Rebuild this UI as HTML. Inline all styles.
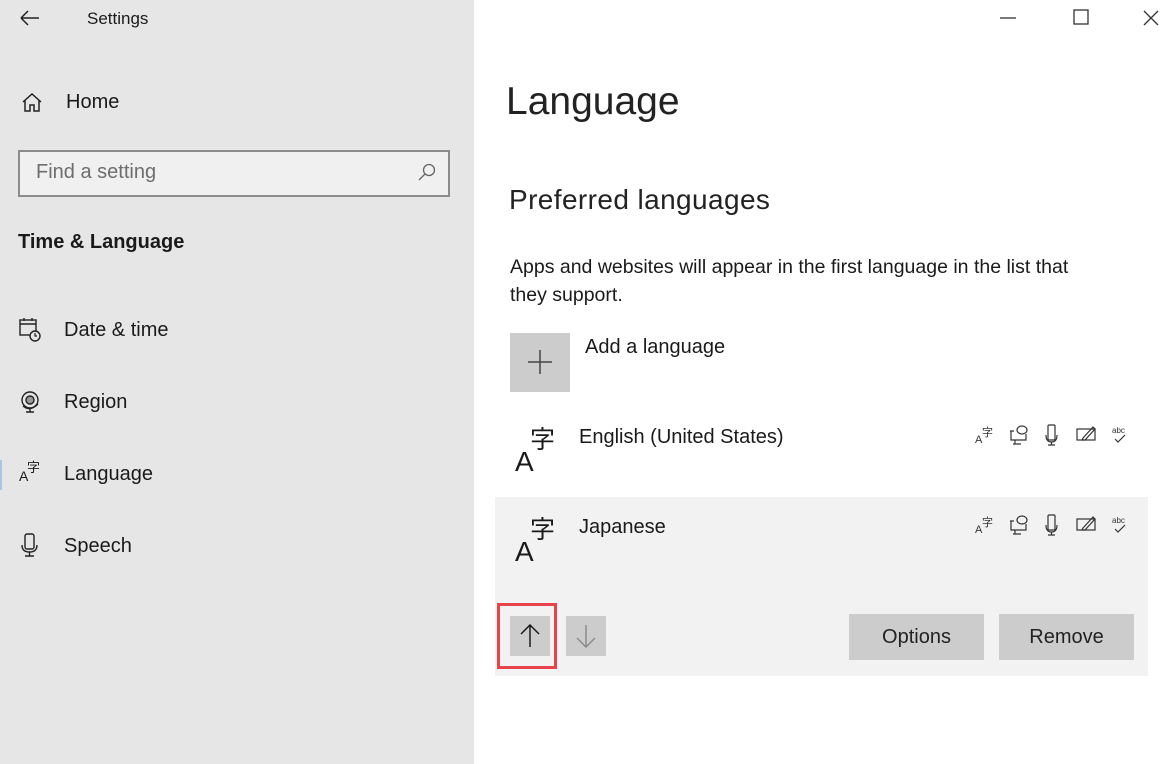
<!DOCTYPE html>
<html><head><meta charset="utf-8"><style>
*{margin:0;padding:0;box-sizing:border-box}
body{width:1175px;height:764px;position:relative;overflow:hidden;background:#fff;font-family:"Liberation Sans","Noto Sans CJK JP",sans-serif;color:#1a1a1a}
.side{position:absolute;left:0;top:0;width:474px;height:764px;background:#e6e6e6}
.a{position:absolute;white-space:nowrap}
svg{position:absolute;overflow:visible}
.btn{position:absolute;background:#cccccc}
.az{position:absolute;font-size:24px;line-height:1}
</style></head><body>
<div class="side"></div>
<svg style="left:20px;top:10px" width="20" height="16"><path d="M1 8H19M1 8L8 1M1 8L8 15" stroke="#222" stroke-width="1.5" fill="none"/></svg>
<div class="a" style="left:87px;top:9px;font-size:17px">Settings</div>
<svg style="left:22px;top:93px" width="20" height="20"><path d="M1 9L10 1L19 9M3 7V18H8V12H12V18H17V7" stroke="#222" stroke-width="1.5" fill="none"/></svg>
<div class="a" style="left:66px;top:91px;font-size:20px">Home</div>
<div style="position:absolute;left:18px;top:150px;width:432px;height:47px;border:2px solid #8c8c8c;background:#f0f0f0"></div>
<div class="a" style="left:36px;top:161px;font-size:20px;color:#6d6d6d">Find a setting</div>
<svg style="left:418px;top:163px" width="18" height="18"><circle cx="11" cy="7" r="5.5" stroke="#666" stroke-width="1.3" fill="none"/><path d="M7 11L1 17" stroke="#666" stroke-width="1.3"/></svg>
<div class="a" style="left:18px;top:231px;font-size:20px;font-weight:bold">Time &amp; Language</div>
<svg style="left:19px;top:318px" width="24" height="24"><rect x="1" y="2" width="16" height="15" stroke="#222" stroke-width="1.4" fill="none"/><path d="M1 6H17M5 0V3M13 0V3" stroke="#222" stroke-width="1.4"/><circle cx="16" cy="18" r="5" fill="#e6e6e6" stroke="#222" stroke-width="1.4"/><path d="M16 15V18H18" stroke="#222" stroke-width="1.2" fill="none"/></svg>
<div class="a" style="left:64px;top:319px;font-size:20px">Date &amp; time</div>
<svg style="left:19px;top:390px" width="24" height="24"><circle cx="11" cy="10" r="8" stroke="#222" stroke-width="1.4" fill="none"/><circle cx="11" cy="10" r="4" stroke="#222" stroke-width="1.4" fill="#999"/><path d="M4 16Q11 22 19 14M11 19V22M7 22H15" stroke="#222" stroke-width="1.4" fill="none"/></svg>
<div class="a" style="left:64px;top:391px;font-size:20px">Region</div>
<div style="position:absolute;left:0;top:460px;width:2px;height:30px;background:#a6c8e6"></div>
<div class="az" style="left:19px;top:469px;font-size:14px">A</div><div class="az" style="left:27px;top:461px;font-size:13px">字</div>
<div class="a" style="left:64px;top:463px;font-size:20px">Language</div>
<svg style="left:21px;top:533px" width="20" height="26"><rect x="4" y="1" width="9" height="15" rx="2" stroke="#222" stroke-width="1.4" fill="none"/><path d="M1 12Q1 19 8.5 19Q16 19 16 12M8.5 19V23M4 23H13" stroke="#222" stroke-width="1.4" fill="none"/></svg>
<div class="a" style="left:64px;top:535px;font-size:20px">Speech</div>
<svg style="left:1000px;top:17px" width="16" height="2"><path d="M0 1H16" stroke="#333" stroke-width="1.3"/></svg>
<svg style="left:1073px;top:9px" width="16" height="16"><rect x="1" y="1" width="14" height="14" stroke="#333" stroke-width="1.3" fill="none"/></svg>
<svg style="left:1143px;top:10px" width="16" height="16"><path d="M1 1L15 15M15 1L1 15" stroke="#333" stroke-width="1.3"/></svg>
<div class="a" style="left:506px;top:80px;font-size:39px;color:#222">Language</div>
<div class="a" style="left:509px;top:184px;font-size:28px;letter-spacing:0.4px;color:#222">Preferred languages</div>
<div class="a" style="left:510px;top:253px;font-size:19.5px;line-height:28px;white-space:normal;width:580px">Apps and websites will appear in the first language in the list that they support.</div>
<div class="btn" style="left:510px;top:333px;width:60px;height:59px"></div>
<svg style="left:528px;top:350px" width="24" height="24"><path d="M12 0V24M0 12H24" stroke="#444" stroke-width="1.5"/></svg>
<div class="a" style="left:585px;top:336px;font-size:20px">Add a language</div>
<div class="az" style="left:515px;top:448px;font-size:28px">A</div><div class="az" style="left:530px;top:428px;font-size:25px">字</div>
<div class="a" style="left:579px;top:426px;font-size:20px">English (United States)</div>
<div style="position:absolute;left:495px;top:497px;width:653px;height:179px;background:#f2f2f2"></div>
<div class="az" style="left:515px;top:538px;font-size:28px">A</div><div class="az" style="left:530px;top:518px;font-size:25px">字</div>
<div class="a" style="left:579px;top:516px;font-size:20px">Japanese</div>
<svg style="left:975px;top:424px" width="160" height="24">
<g stroke="#333" stroke-width="1.2" fill="none">
<text x="0" y="19" font-size="11" fill="#333" stroke="none" font-family="Liberation Sans">A</text><text x="7" y="12" font-size="11" fill="#333" stroke="none" font-family="Noto Sans CJK JP">字</text>
<path d="M35 7H39M36 7V16H51V10M40 16V20M38 20H46"/><ellipse cx="47" cy="6" rx="5" ry="4"/>
<rect x="73" y="1" width="7" height="15" rx="1"/><path d="M71 11Q71 18 76.5 18Q82 18 82 11M76.5 18V21M73 21H80"/>
<rect x="102" y="5" width="18" height="11"/><path d="M108 14L118 3L120 5L110 16L107 16Z"/>
<text x="137" y="9" font-size="8" fill="#333" stroke="none" font-family="Liberation Sans">abc</text><path d="M140 15L143 18L150 11"/>
</g></svg>
<svg style="left:975px;top:514px" width="160" height="24">
<g stroke="#333" stroke-width="1.2" fill="none">
<text x="0" y="19" font-size="11" fill="#333" stroke="none" font-family="Liberation Sans">A</text><text x="7" y="12" font-size="11" fill="#333" stroke="none" font-family="Noto Sans CJK JP">字</text>
<path d="M35 7H39M36 7V16H51V10M40 16V20M38 20H46"/><ellipse cx="47" cy="6" rx="5" ry="4"/>
<rect x="73" y="1" width="7" height="15" rx="1"/><path d="M71 11Q71 18 76.5 18Q82 18 82 11M76.5 18V21M73 21H80"/>
<rect x="102" y="5" width="18" height="11"/><path d="M108 14L118 3L120 5L110 16L107 16Z"/>
<text x="137" y="9" font-size="8" fill="#333" stroke="none" font-family="Liberation Sans">abc</text><path d="M140 15L143 18L150 11"/>
</g></svg>
<div style="position:absolute;left:497px;top:603px;width:60px;height:66px;border:3px solid #e8434a"></div>
<div class="btn" style="left:510px;top:616px;width:40px;height:40px"></div>
<svg style="left:520px;top:624px" width="20" height="24"><path d="M10 23V1M1 10L10 1L19 10" stroke="#111" stroke-width="1.4" fill="none"/></svg>
<div class="btn" style="left:566px;top:616px;width:40px;height:40px"></div>
<svg style="left:576px;top:624px" width="20" height="24"><path d="M10 1V23M1 14L10 23L19 14" stroke="#888" stroke-width="1.4" fill="none"/></svg>
<div class="btn" style="left:849px;top:614px;width:135px;height:46px"></div>
<div class="a" style="left:849px;top:626px;width:135px;text-align:center;font-size:20px;color:#222">Options</div>
<div class="btn" style="left:999px;top:614px;width:135px;height:46px"></div>
<div class="a" style="left:999px;top:626px;width:135px;text-align:center;font-size:20px;color:#222">Remove</div>
</body></html>
